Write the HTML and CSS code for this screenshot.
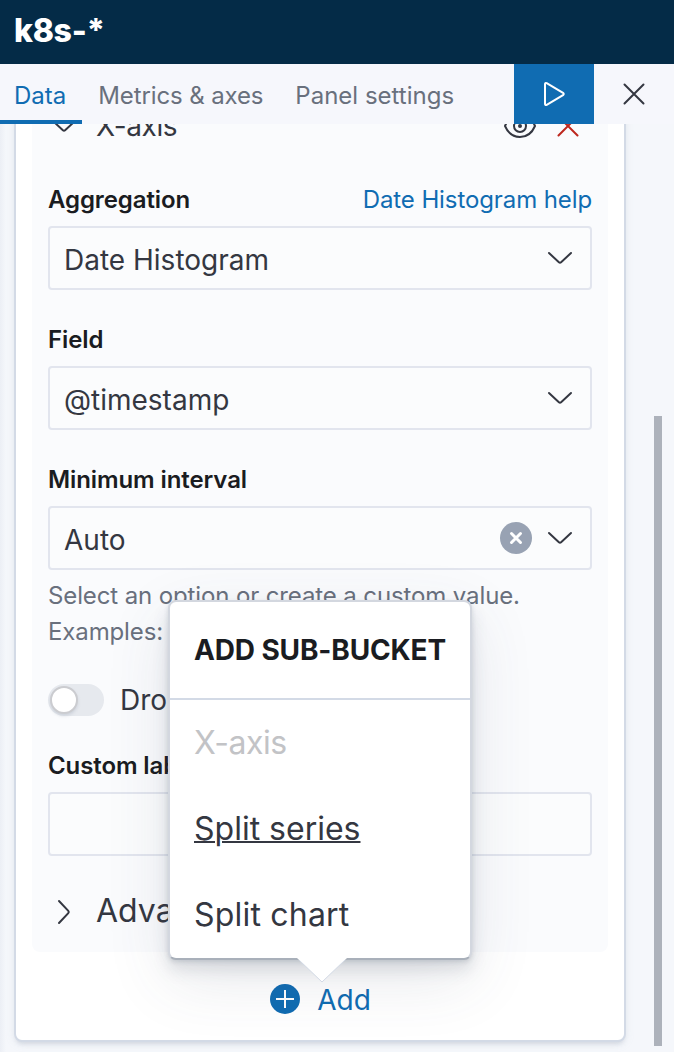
FILE: index.html
```html
<!DOCTYPE html>
<html lang="en">
<head>
<meta charset="utf-8">
<title>k8s-*</title>
<link rel="stylesheet" href="styles.css">
</head>
<body>
<div class="app">
  <header class="header"><h1 class="title">k8s-*</h1></header>
  <nav class="tabs">
    <a class="tab tab-active"><span>Data</span></a>
    <a class="tab"><span class="tight">Metrics &amp; axes</span></a>
    <a class="tab"><span>Panel settings</span></a>
    <button class="apply" aria-label="Update"><svg width="32" height="32" viewBox="0 0 32 32"><path d="M7 6.200v19.600q0 1.900 1.700 1L25 17.200q1.500-1.200 0-2.400L8.700 5.200Q7 4.300 7 6.200z" fill="none" stroke="#fff" stroke-width="2"/></svg></button>
    <button class="discard" aria-label="Discard"><svg width="32" height="32" viewBox="0 0 32 32"><path d="M6.500 6.500l19 19M25.500 6.500l-19 19" stroke="#343741" stroke-width="2" stroke-linecap="round"/></svg></button>
  </nav>
  <main class="scroll">
    <section class="panel">
      <div class="bucket">
        <div class="bucket-head">
          <svg width="32" height="32" viewBox="0 0 32 32"><path class="chev" d="M5 11l9.900 9.300q1.100 1 2.200 0L27 11"/></svg>
          <span class="acc-label">X-axis</span>
          <svg class="eye" width="32" height="32" viewBox="0 0 32 32"><g fill="none" stroke="#343741" stroke-width="2"><path d="M1 16C4 9 9.500 5 16 5s12 4 15 11c-3 7-8.500 11-15 11S4 23 1 16z"/><circle cx="16" cy="16" r="6"/></g><circle cx="16" cy="16" r="2" fill="#343741"/></svg>
          <svg width="32" height="32" viewBox="0 0 32 32"><path d="M6.500 6.500l19 19M25.500 6.500l-19 19" stroke="#bd271e" stroke-width="2" stroke-linecap="round"/></svg>
        </div>
        <div class="field">
          <div class="label-row"><label class="label">Aggregation</label><a class="help-link">Date Histogram help</a></div>
          <div class="control"><span>Date Histogram</span><svg width="32" height="32" viewBox="0 0 32 32"><path class="chev" d="M5 11l9.900 9.300q1.100 1 2.200 0L27 11"/></svg></div>
        </div>
        <div class="field">
          <div class="label-row"><label class="label">Field</label></div>
          <div class="control"><span>@timestamp</span><svg width="32" height="32" viewBox="0 0 32 32"><path class="chev" d="M5 11l9.900 9.300q1.100 1 2.200 0L27 11"/></svg></div>
        </div>
        <div class="field">
          <div class="label-row"><label class="label">Minimum interval</label></div>
          <div class="control"><span>Auto</span>
            <svg class="clear" width="32" height="32" viewBox="0 0 32 32"><circle cx="16" cy="16" r="16" fill="#98a2b3"/><path d="M11.500 11.500l9 9M20.500 11.500l-9 9" stroke="#fff" stroke-width="3" stroke-linecap="round"/></svg>
            <svg width="32" height="32" viewBox="0 0 32 32"><path class="chev" d="M5 11l9.900 9.300q1.100 1 2.200 0L27 11"/></svg></div>
          <p class="hint">Select an option or create a custom value.<br>Examples: 30s</p>
        </div>
        <div class="switch-row"><span class="switch"><span class="thumb"></span></span><span>Drop partial buckets</span></div>
        <div class="field">
          <div class="label-row"><label class="label">Custom label</label></div>
          <div class="control"></div>
        </div>
        <div class="advanced"><svg width="32" height="32" viewBox="0 0 32 32"><path class="chev" d="M11 5l9.300 9.900q1 1.100 0 2.200L11 27"/></svg><span class="acc-label">Advanced</span></div>
      </div>
      <div class="add-row">
        <svg width="30" height="30" viewBox="0 0 30 30"><circle cx="15" cy="15" r="15" fill="#106cb2"/><path d="M15 6v18M6 15h18" stroke="#fff" stroke-width="2"/></svg>
        <span class="add">Add</span>
      </div>
    </section>
    <div class="scrollbar"></div>
  </main>
  <div class="popover">
    <div class="popover-title"><span>ADD SUB-BUCKET</span></div>
    <div class="menu-item disabled"><span>X-axis</span></div>
    <div class="menu-item focused"><span>Split series</span></div>
    <div class="menu-item chart"><span>Split chart</span></div>
    <svg class="arrow" width="50" height="26" viewBox="0 0 50 26"><path d="M0 0h50L25 24z" fill="#fff"/><path d="M2 2l23 22L48 2" fill="none" stroke="#d3dae6" stroke-width="1"/></svg>
  </div>
</div>
</body>
</html>
```
FILE: styles.css
```css
* { box-sizing: border-box; }
body { margin: 0; font-family: Inter, "Liberation Sans", sans-serif; color: #343741; background: #f5f7fa; }
svg { display: block; flex: none; }
button { border: 0; padding: 0; background: none; display: flex; align-items: center; justify-content: center; }
.app { position: relative; width: 674px; height: 1052px; overflow: hidden; display: flex; flex-direction: column; white-space: nowrap; background: linear-gradient(90deg, #eceff5 0, #f5f7fb 6px); }
.header { flex: none; height: 64px; background: #042b47; padding: 0 14px; display: flex; align-items: center; }
.title { margin: 0 0 3px; font-size: 32px; line-height: 40px; font-weight: 800; letter-spacing: -.3px; color: #fff; }
.tabs { flex: none; height: 60px; display: flex; background: #f6f7fc; font-size: 24px; color: #69707d; }
.tab { padding: 14px 16px 0; line-height: 36px; border-bottom: 4px solid transparent; }
.tab-active { padding-left: 14px; color: #106cb2; border-color: #106cb2; }
.tight { letter-spacing: -.12px; }
.apply { width: 80px; height: 60px; background: #106cb2; margin-left: auto; }
.discard { width: 80px; height: 60px; }
.scroll { flex: 1; min-height: 0; overflow: hidden; display: flex; justify-content: space-between; align-items: flex-start; padding: 0 12px 0 14px; }
.panel { width: 612px; height: 954px; margin-top: -36px; border: 2px solid #d3dae6; border-radius: 8px; background: #fff; padding: 16px; box-shadow: 0 4px 4px -2px rgba(152,162,179,.3), 0 2px 10px rgba(152,162,179,.12); }
.bucket { height: 846px; background: #fafbfd; border-radius: 8px; padding: 0 16px; }
.bucket-head { height: 40px; display: flex; align-items: center; gap: 16px; margin-bottom: 35px; }
.eye { margin-left: auto; }
.bucket-head svg:last-child { margin-right: 8px; }
.acc-label { font-size: 32px; line-height: 40px; }
.bucket-head .acc-label { font-size: 28px; letter-spacing: -.4px; }
.chev { fill: none; stroke: #343741; stroke-width: 2; stroke-linecap: round; }
.field { margin-bottom: 31px; }
.label-row { height: 36px; margin-bottom: 9px; display: flex; justify-content: space-between; align-items: center; font-size: 24px; letter-spacing: -.1px; }
.label { font-weight: 600; color: #1a1c21; }
.help-link, .add { color: #106cb2; }
.control { height: 64px; border: 2px solid #e2e5ee; border-radius: 4px; background: #fbfcfd; display: flex; align-items: center; padding: 0 14px; font-size: 28px; }
.control > span { margin-right: auto; padding-top: 3px; }
.clear { margin-right: 12px; }
.hint { margin: 8px 0 0; font-size: 24px; line-height: 36px; letter-spacing: -.12px; color: #69707d; }
.switch-row { height: 32px; display: flex; align-items: center; gap: 16px; font-size: 28px; margin: 34px 0 31px; }
.switch { width: 56px; height: 32px; border-radius: 16px; background: #e6e9ee; padding: 2px; }
.thumb { display: block; width: 28px; height: 28px; border-radius: 50%; border: 2px solid #cbccd0; background: #fff; box-shadow: 0 2px 3px rgba(152,162,179,.3); }
.advanced { display: flex; align-items: center; gap: 16px; margin-top: 37px; }
.advanced .acc-label { margin-top: -2px; }
.add-row { display: flex; align-items: center; justify-content: center; gap: 17px; height: 60px; margin-top: 17px; font-size: 28px; padding-left: 1px; }
.add { padding-top: 2px; }
.popover { position: absolute; left: 168px; top: 600px; width: 304px; height: 360px; border: 2px solid #d3d7df; border-bottom-color: #a9b0ba; border-radius: 8px; background: #fff; box-shadow: 0 2px 4px rgba(65,78,101,.16), 0 10px 16px rgba(65,78,101,.15), 0 20px 64px rgba(65,78,101,.12); }
.popover-title { height: 98px; border-bottom: 2px solid #d3dae6; padding: 0 24px; display: flex; align-items: center; font-size: 28px; font-weight: 700; letter-spacing: -.14px; color: #1a1c21; }
.menu-item { height: 86px; padding: 0 24px 2px; display: flex; align-items: center; font-size: 32px; }
.disabled { color: #c2c3c6; letter-spacing: -.5px; }
.focused { text-decoration: underline; text-decoration-thickness: 2px; }
.chart { letter-spacing: .2px; }
.arrow { position: absolute; left: 127px; top: 356px; }
.scrollbar { width: 8px; height: 630px; margin-top: 292px; background: #adb2bb; }
```
